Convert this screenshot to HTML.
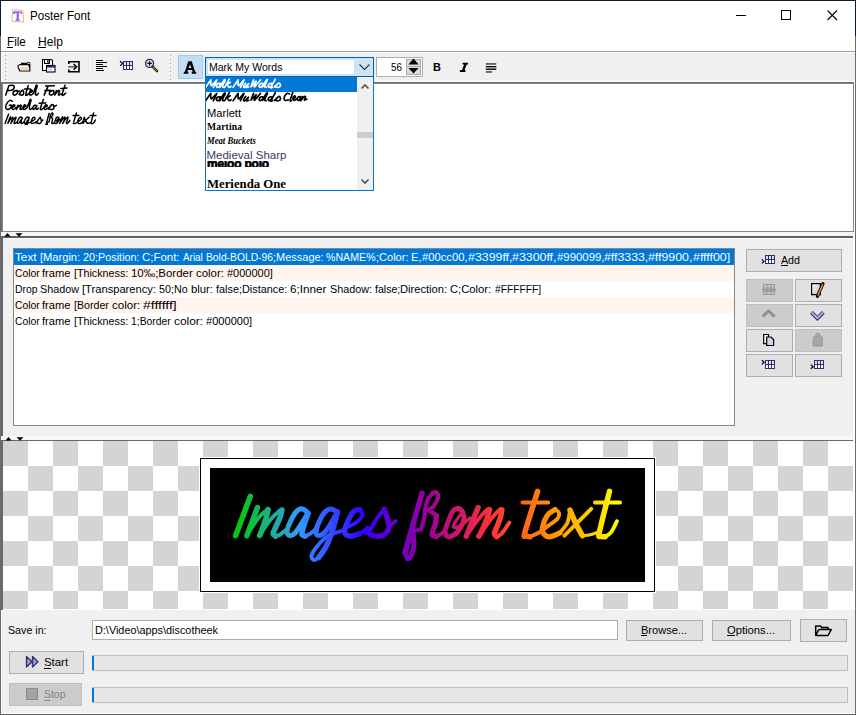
<!DOCTYPE html>
<html>
<head>
<meta charset="utf-8">
<title>Poster Font</title>
<style>
html,body{margin:0;padding:0;}
body{width:856px;height:715px;overflow:hidden;background:#fff;font-family:"Liberation Sans",sans-serif;font-size:11px;color:#000;position:relative;}
.abs{position:absolute;}
.t{position:absolute;white-space:nowrap;line-height:1;}
.btn{position:absolute;box-sizing:border-box;border:1px solid #adadad;background:#e1e1e1;}
.btn.dis{background:#cccccc;border-color:#bfbfbf;}
u{text-decoration:none;border-bottom:1px solid currentColor;}
.row{font-size:11px;line-height:1;white-space:nowrap;}
.row span{position:absolute;top:0;transform-origin:0 0;white-space:nowrap;}
.scr{-webkit-text-stroke:0.35px #000;font-family:"Liberation Serif",serif;font-style:italic;font-weight:bold;font-size:15px;transform-origin:0 0;transform:skewX(-8deg) scaleX(0.82);letter-spacing:-0.2px;}
.scr2{-webkit-text-stroke:0.3px currentColor;font-family:"Liberation Serif",serif;font-style:italic;font-weight:bold;font-size:13.5px;transform-origin:0 0;transform:skewX(-10deg) scaleX(0.86);letter-spacing:-0.2px;}
</style>
</head>
<body>
<!-- window frame -->
<div class="abs" id="frame" style="left:0;top:0;width:856px;height:715px;background:#fff;"></div>

<!-- title bar -->
<svg class="abs" style="left:10px;top:8px;" width="16" height="16" viewBox="0 0 16 16">
  <path d="M2.5 1.5 L13 2.5 L13.5 14 L2 13.5 Z" fill="#fff" stroke="#e9b98a" stroke-width="1"/>
  <path d="M3.5 3.5 H12 V6 H11 L10.6 4.8 H8.8 V11.6 L10 12 V12.8 H5.6 V12 L6.8 11.6 V4.8 H5 L4.6 6 H3.5 Z" fill="#c23cf0"/>
  <path d="M3.5 3.5 H7.8 V12.8 H5.6 V12 L6.8 11.6 V4.8 H5 L4.6 6 H3.5 Z" fill="#5a7bf0"/>
</svg>
<div class="t" id="title" style="left:29.5px;top:8.5px;font-size:13px;transform:scaleX(0.897);transform-origin:0 0;">Poster Font</div>
<svg class="abs" style="left:730px;top:5px;" width="116" height="22" viewBox="0 0 116 22" shape-rendering="crispEdges">
  <rect x="6" y="10" width="10" height="1" fill="#000"/>
  <rect x="51.5" y="5.5" width="9" height="9" fill="none" stroke="#000" stroke-width="1"/>
  <g shape-rendering="geometricPrecision" stroke="#000" stroke-width="1.1"><path d="M97.5 5.5 L107 15 M107 5.5 L97.5 15" fill="none"/></g>
</svg>
<!-- menu -->
<div class="t" id="mfile" style="left:7px;top:34.5px;font-size:13px;transform:scaleX(0.9);transform-origin:0 0;">File</div>
<div class="t" id="mhelp" style="left:38px;top:34.5px;font-size:13px;transform:scaleX(0.93);transform-origin:0 0;">Help</div>
<div class="abs" style="left:7px;top:47px;width:6px;height:1px;background:#000;"></div>
<div class="abs" style="left:38px;top:47px;width:8px;height:1px;background:#000;"></div>
<div class="abs" style="left:1px;top:51px;width:854px;height:1px;background:#a0a0a0;"></div>

<!-- toolbar -->
<div class="abs" id="toolbar" style="left:1px;top:52px;width:854px;height:30px;background:#f0f0f0;border-top:1px solid #fff;border-bottom:1px solid #fff;box-sizing:border-box;"></div>
<div class="abs" style="left:1px;top:52px;width:1px;height:30px;background:#fff;"></div>
<svg class="abs" style="left:0;top:52px;" width="520" height="30" viewBox="0 52 520 30" shape-rendering="crispEdges">
  <!-- grips -->
  <g fill="#a0a0a0">
    <rect x="5" y="55" width="1" height="1"/><rect x="5" y="59" width="1" height="1"/><rect x="5" y="63" width="1" height="1"/><rect x="5" y="67" width="1" height="1"/><rect x="5" y="71" width="1" height="1"/><rect x="5" y="75" width="1" height="1"/><rect x="5" y="79" width="1" height="1"/>
    <rect x="170" y="55" width="1" height="1"/><rect x="170" y="59" width="1" height="1"/><rect x="170" y="63" width="1" height="1"/><rect x="170" y="67" width="1" height="1"/><rect x="170" y="71" width="1" height="1"/><rect x="170" y="75" width="1" height="1"/><rect x="170" y="79" width="1" height="1"/>
  </g>
  <g fill="#fff">
    <rect x="4" y="54" width="1" height="1"/><rect x="4" y="58" width="1" height="1"/><rect x="4" y="62" width="1" height="1"/><rect x="4" y="66" width="1" height="1"/><rect x="4" y="70" width="1" height="1"/><rect x="4" y="74" width="1" height="1"/><rect x="4" y="78" width="1" height="1"/>
    <rect x="169" y="54" width="1" height="1"/><rect x="169" y="58" width="1" height="1"/><rect x="169" y="62" width="1" height="1"/><rect x="169" y="66" width="1" height="1"/><rect x="169" y="70" width="1" height="1"/><rect x="169" y="74" width="1" height="1"/><rect x="169" y="78" width="1" height="1"/>
  </g>
  <!-- thin separator after 3rd icon -->
  <rect x="88" y="56" width="1" height="22" fill="#eaeaea"/>
  <rect x="89" y="56" width="1" height="22" fill="#fafafa"/>
  <!-- folder icon 17..30 x 62..71 -->
  <g shape-rendering="geometricPrecision">
    <path d="M17.5 65.5 L21 62.8 H27 V62.2 H30 V71.5 H19.5 L17.5 67 Z" fill="#fff" stroke="none"/>
    <path d="M27 62.6 H30.2" stroke="#8b1a1a" stroke-width="1.2" fill="none"/>
    <path d="M21 63.3 H27.5 M17.6 66 L20 64.6 H28.5 L29.6 67.2 M17.8 66.4 L19.8 71 H29.8 V63.5" stroke="#000" stroke-width="1.2" fill="none"/>
    <path d="M20.2 67 H28.6 L29 70.2 H20.6 Z" fill="#f2d5ae"/>
  </g>
  <!-- floppy 42..55 x 59..72 -->
  <g shape-rendering="geometricPrecision">
    <path d="M42.5 59.5 H51.5 L52.5 60.5 V70.5 H42.5 Z" fill="#fff" stroke="#000" stroke-width="1.1"/>
    <rect x="44.5" y="59.5" width="5" height="4" fill="#fff" stroke="#000" stroke-width="1"/>
    <rect x="47.2" y="60.2" width="1.4" height="2.6" fill="#000"/>
    <rect x="46.5" y="65.5" width="8.5" height="6.5" fill="#fff" stroke="#000" stroke-width="1.1"/>
    <rect x="47" y="66" width="7.5" height="1.6" fill="#2a2a78"/>
    <rect x="48.6" y="68.8" width="3.6" height="1.6" fill="#c8c8c8"/>
  </g>
  <!-- arrow into box 68..80 x 61..72 -->
  <g shape-rendering="geometricPrecision" fill="none">
    <path d="M68.8 64 V61.8 H79 V71.8 H68.8 V69.6" stroke="#000" stroke-width="1.6"/>
    <path d="M68.2 66.8 H75.5" stroke="#555" stroke-width="1.5"/>
    <path d="M73.6 64 L76.6 66.8 L73.6 69.6" stroke="#000" stroke-width="1.5"/>
  </g>
  <!-- align-left icon 96..107 x 60..70 -->
  <g fill="#000">
    <rect x="96" y="60" width="7" height="1"/><rect x="96" y="62" width="11" height="1"/><rect x="96" y="64" width="7" height="1"/><rect x="96" y="66" width="11" height="1"/><rect x="96" y="68" width="7" height="1"/><rect x="96" y="70" width="8" height="1"/>
  </g>
  <!-- insert table icon 120..133 x 60..70 -->
  <g>
      <rect x="123" y="61" width="10" height="9" fill="#30306e"/>
      <rect x="124" y="62" width="2" height="3" fill="#dcdcf6"/><rect x="127" y="62" width="2" height="3" fill="#dcdcf6"/><rect x="130" y="62" width="2" height="3" fill="#dcdcf6"/>
      <rect x="124" y="66" width="2" height="3" fill="#fff"/><rect x="127" y="66" width="2" height="3" fill="#fff"/><rect x="130" y="66" width="2" height="3" fill="#fff"/>
      <path d="M120 61.3 L122.7 63.6 L120 65.9" stroke="#000" stroke-width="1.2" fill="none" shape-rendering="geometricPrecision"/>
  </g>
  <!-- magnifier 145..158 x 59..72 -->
  <g shape-rendering="geometricPrecision" fill="none">
    <circle cx="149.6" cy="63.4" r="4" fill="#dcdcf0" stroke="#26264e" stroke-width="1.3"/>
    <path d="M147.4 63.4 H151.8 M149.6 61.2 V65.6" stroke="#000" stroke-width="1.2"/>
    <path d="M152.6 66.6 L157 71" stroke="#1a1a1a" stroke-width="2.6" stroke-linecap="round"/>
    <path d="M153.2 67.2 L156.8 70.8" stroke="#c87830" stroke-width="1.2" stroke-linecap="round"/>
  </g>
  <!-- A button 178..203 x 55..79 -->
  <rect x="178.5" y="55.5" width="24" height="23" fill="#c4ddf3" stroke="#9ccbf0" stroke-width="1"/>
  <path shape-rendering="geometricPrecision" fill-rule="evenodd" fill="#000" d="M188.3 61.3 H191.7 L195.1 71.7 H196.2 V73.8 H191.8 V71.7 H192.7 L192.1 69.9 H187.9 L187.3 71.7 H188.3 V73.8 H183.8 V71.7 H184.9 Z M190 64.2 L191.4 68 H188.6 Z"/>
  <!-- bold / italic / justify -->
  <g shape-rendering="geometricPrecision">
    <rect x="485.8" y="63.2" width="10.5" height="1.5" fill="#444"/>
    <rect x="485.8" y="66" width="10.5" height="1.3" fill="#000"/>
    <rect x="485.8" y="67.3" width="10.5" height="1.3" fill="#999"/>
    <rect x="485.8" y="68.6" width="10.5" height="1.3" fill="#000"/>
    <rect x="485.8" y="71.2" width="6.4" height="1.5" fill="#444"/>
    <path d="M462.6 62.7 H468.1 V64.5 H466.7 L464.6 70.1 H465.4 V71.9 H459.9 V70.1 H462 L464.1 64.5 H462.6 Z" fill="#000"/>
  </g>
</svg>
<div class="t" id="tbB" style="left:433px;top:62px;font-size:11px;font-weight:bold;">B</div>

<!-- font combo 205..373 x 57..76 -->
<div class="abs" id="combo" style="left:205px;top:57px;width:169px;height:20px;box-sizing:border-box;border:1px solid #0063b1;background:#cce4f7;"></div>
<div class="abs" style="left:208px;top:60px;width:146px;height:14px;background:#fff;"></div>
<div class="t" id="combotext" style="left:209px;top:61.85px;font-size:11px;transform:scaleX(0.9567);transform-origin:0 0;">Mark My Words</div>
<svg class="abs" style="left:358px;top:62px;" width="14" height="10" viewBox="0 0 14 10"><path d="M1.5 2.5 L6.5 7.5 L11.5 2.5" stroke="#333" stroke-width="1.1" fill="none"/></svg>

<!-- size spinner 376..422 x 57..76 -->
<div class="abs" id="spin" style="left:376px;top:57px;width:47px;height:20px;box-sizing:border-box;border:1px solid #abadb3;background:#fff;"></div>
<div class="t" id="spintext" style="left:391px;top:61.85px;font-size:11px;transform:scaleX(0.8978);transform-origin:0 0;">56</div>
<div class="abs" style="left:406px;top:59px;width:15px;height:8px;box-sizing:border-box;border:1px solid #acacac;background:#dddddd;"></div>
<div class="abs" style="left:406px;top:66px;width:15px;height:9px;box-sizing:border-box;border:1px solid #acacac;background:#dddddd;"></div>
<svg class="abs" style="left:406px;top:58px;" width="16" height="18" viewBox="0 0 16 18"><path d="M7.5 0.6 L12.6 6.4 H2.4 Z M2.4 10 H12.6 L7.5 15.6 Z" fill="#000"/></svg>

<!-- text area -->
<div class="abs" id="textarea" style="left:1px;top:82px;width:853px;height:150px;box-sizing:border-box;background:#fff;border:1px solid #828790;border-top:1px solid #696969;border-left:1px solid #696969;"></div>
<div class="abs" style="left:2px;top:83px;width:851px;height:1px;background:#828790;"></div>
<div class="abs" style="left:2px;top:83px;width:1px;height:148px;background:#828790;"></div>
<!-- ta script -->
<svg class="abs" id="tascript" style="left:3px;top:84px;" width="110" height="41" viewBox="3 84 110 41">
<g fill="none" stroke="#000" stroke-linecap="round" stroke-linejoin="round">
<path stroke-width="1.55" d="M8.9 85.7 L5.7 95.1 M8.9 85.7 C9.6 85.6 11.7 85.0 12.6 85.3 C13.5 85.6 14.4 86.5 14.3 87.3 C14.2 88.1 12.8 89.7 11.8 90.2 C10.8 90.8 8.7 90.5 8.1 90.6 M17.1 90.6 C16.6 90.7 15.0 90.5 14.3 91.0 C13.6 91.5 12.9 93.2 13.0 93.9 C13.1 94.6 14.3 95.2 15.1 95.1 C15.8 94.9 17.2 93.8 17.5 93.0 C17.8 92.2 17.2 91.0 17.1 90.6 M17.3 92.0 L19.5 91.0 M19.2 94.3 C19.7 93.6 21.6 90.5 22.4 90.2 C23.1 89.9 23.7 91.8 23.7 92.6 C23.7 93.4 23.1 94.8 22.4 95.1 C21.7 95.4 20.1 94.8 19.6 94.7 M28.2 85.7 C27.8 87.1 25.9 92.7 25.7 94.3 C25.5 95.9 26.3 95.2 26.9 95.1 C27.4 94.9 28.6 93.7 29.0 93.4 M24.5 89.0 L30.6 89.0 M29.4 93.0 C29.9 92.7 31.9 91.9 32.3 91.4 C32.7 90.9 32.1 90.3 31.8 90.2 C31.5 90.1 30.6 90.4 30.2 91.0 C29.8 91.6 29.3 93.2 29.4 93.9 C29.5 94.6 30.3 95.2 31.0 95.1 C31.7 95.0 33.1 93.7 33.5 93.4 M33.5 93.4 C33.7 92.7 34.2 90.8 34.7 89.4 C35.2 88.1 35.9 85.8 36.3 85.3 C36.7 84.8 37.3 85.3 37.2 86.1 C37.1 86.9 36.2 88.8 35.9 90.2 C35.6 91.6 35.4 93.5 35.5 94.3 C35.6 95.1 36.3 95.2 36.8 95.1 C37.3 94.9 38.1 93.7 38.4 93.4 M47.8 86.9 L44.1 95.1 M45.7 86.1 L54.3 85.7 M44.9 90.6 L50.2 90.2 M53.5 90.6 C53.0 90.7 51.4 90.5 50.7 91.0 C50.0 91.5 49.3 93.2 49.4 93.9 C49.5 94.6 50.8 95.2 51.5 95.1 C52.2 94.9 53.6 93.8 53.9 93.0 C54.2 92.2 53.6 91.0 53.5 90.6 M56.4 90.6 L54.7 95.1 M55.1 94.3 C55.6 93.7 57.6 91.1 58.4 90.6 C59.1 90.0 59.6 90.4 59.6 91.0 C59.6 91.6 58.5 93.6 58.4 94.3 C58.3 95.0 58.8 95.2 59.2 95.1 C59.6 95.0 60.6 94.1 60.9 93.9 M65.0 85.3 C64.5 86.8 62.4 92.7 62.1 94.3 C61.8 95.9 62.7 95.3 63.3 95.1 C63.9 94.9 65.4 93.3 65.8 93.0 M60.9 88.5 L67.0 88.1"/>
<path stroke-width="1.55" d="M12.2 101.2 C11.8 101.1 10.7 100.1 9.8 100.4 C8.9 100.8 7.6 102.2 6.9 103.3 C6.2 104.4 5.6 106.3 5.7 107.3 C5.8 108.3 6.5 109.2 7.3 109.4 C8.0 109.6 9.5 108.9 10.2 108.2 C10.9 107.5 11.5 105.8 11.4 105.3 C11.3 104.8 9.7 105.3 9.4 105.3 M11.8 107.8 C12.3 107.5 14.3 106.6 14.7 106.1 C15.1 105.6 14.7 105.0 14.3 104.9 C14.0 104.8 13.0 105.2 12.6 105.7 C12.2 106.2 11.7 107.6 11.8 108.2 C11.9 108.8 12.7 109.5 13.4 109.4 C14.1 109.3 15.5 108.1 15.9 107.8 M17.9 105.3 L16.3 109.4 M16.7 108.6 C17.2 108.0 19.2 105.8 20.0 105.3 C20.8 104.8 21.2 105.2 21.2 105.7 C21.2 106.2 20.1 108.0 20.0 108.6 C19.9 109.2 20.4 109.5 20.8 109.4 C21.2 109.3 22.1 108.4 22.4 108.2 M22.4 108.2 C22.9 107.8 25.2 106.6 25.7 106.1 C26.2 105.5 25.6 105.0 25.3 104.9 C25.0 104.8 24.1 105.2 23.7 105.7 C23.3 106.2 22.8 107.6 22.9 108.2 C23.0 108.8 23.8 109.5 24.5 109.4 C25.2 109.3 26.5 108.1 26.9 107.8 M26.9 107.8 C27.2 107.1 28.1 105.1 28.6 103.7 C29.2 102.3 29.8 100.1 30.2 99.6 C30.6 99.0 31.1 99.6 31.0 100.4 C30.9 101.2 30.1 103.1 29.8 104.5 C29.5 105.9 29.3 107.8 29.4 108.6 C29.5 109.4 30.1 109.5 30.6 109.4 C31.1 109.3 32.0 108.1 32.3 107.8 M36.8 105.7 C36.4 105.6 35.4 105.0 34.7 105.3 C34.0 105.6 32.9 107.1 32.7 107.8 C32.5 108.5 33.0 109.4 33.5 109.4 C34.0 109.4 35.0 108.4 35.5 107.8 C36.0 107.2 36.6 106.0 36.8 105.7 M36.8 105.7 C36.6 106.2 35.9 108.0 35.9 108.6 C35.9 109.2 36.4 109.5 36.8 109.4 C37.2 109.3 38.1 108.4 38.4 108.2 M43.3 99.6 C42.8 101.1 40.7 107.0 40.4 108.6 C40.1 110.2 41.2 109.5 41.7 109.4 C42.2 109.3 43.4 108.1 43.7 107.8 M39.2 103.3 L45.7 102.9 M43.7 107.8 C44.2 107.5 46.5 106.6 47.0 106.1 C47.5 105.6 47.0 105.0 46.6 104.9 C46.2 104.8 45.3 105.2 44.9 105.7 C44.5 106.2 44.0 107.6 44.1 108.2 C44.2 108.8 45.0 109.5 45.7 109.4 C46.4 109.3 47.8 108.1 48.2 107.8 M48.2 109.0 C48.9 108.2 51.3 104.8 52.3 104.5 C53.2 104.2 53.8 106.1 53.9 106.9 C54.0 107.7 53.5 109.1 52.7 109.4 C52.0 109.8 50.0 109.1 49.4 109.0 M54.3 106.5 L56.4 105.3"/>
<path stroke-width="1.4" d="M8.6 114.1 L5.1 123.4 M10.3 116.7 L7.8 123.4 M8.2 122.6 C8.6 122.0 9.9 119.9 10.6 119.1 C11.3 118.2 12.0 117.7 12.4 117.4 C12.7 117.1 12.7 117.2 12.8 117.2 M12.8 117.2 C12.7 117.5 12.6 118.2 12.4 119.1 C12.1 120.0 11.4 121.8 11.2 122.5 C10.9 123.2 10.9 123.2 10.8 123.4 M11.1 122.8 C11.5 122.2 12.8 120.3 13.5 119.4 C14.3 118.5 15.2 117.8 15.6 117.4 C16.0 117.1 16.0 117.3 16.1 117.3 M16.1 117.3 C16.0 117.6 15.9 118.3 15.6 119.1 C15.3 119.9 14.6 121.4 14.3 122.0 C14.0 122.7 13.9 122.7 14.0 123.0 C14.0 123.2 14.5 123.4 14.6 123.5 M14.6 123.5 C14.7 123.4 15.2 123.4 15.6 123.1 C16.0 122.9 16.8 122.2 17.0 122.0 M22.3 118.0 C22.0 117.9 21.4 117.1 20.9 117.0 C20.5 117.0 19.9 117.2 19.4 117.8 C18.9 118.3 18.3 119.5 18.0 120.3 C17.6 121.0 17.2 122.0 17.2 122.5 C17.2 123.0 17.7 123.3 18.0 123.4 C18.3 123.4 18.8 123.1 19.2 122.8 C19.6 122.4 19.8 121.9 20.3 121.1 C20.9 120.3 21.9 118.5 22.3 118.0 M22.3 118.0 C22.1 118.5 21.5 120.3 21.2 121.1 C21.0 122.0 20.7 122.6 20.8 123.0 C20.8 123.3 21.4 123.4 21.5 123.5 M21.5 123.5 C21.7 123.4 22.3 123.2 22.7 123.0 C23.1 122.7 23.9 122.0 24.1 121.8 M29.2 117.7 C29.0 117.6 28.2 117.0 27.7 117.0 C27.2 117.0 26.8 117.2 26.3 117.8 C25.8 118.3 25.1 119.4 24.8 120.3 C24.4 121.1 24.2 122.1 24.2 122.6 C24.2 123.1 24.6 123.3 24.9 123.4 C25.2 123.4 25.6 123.2 26.0 122.8 C26.4 122.3 26.9 121.7 27.4 120.8 C28.0 120.0 28.9 118.3 29.2 117.7 M29.2 117.7 C29.1 118.3 28.7 119.8 28.3 121.1 C27.9 122.4 27.3 124.3 26.7 125.6 C26.1 126.8 25.1 128.0 24.8 128.5 M24.8 128.5 C24.6 128.6 24.0 129.2 23.8 129.1 C23.5 129.1 23.0 128.7 23.1 128.2 C23.1 127.7 23.6 127.0 24.2 126.2 C24.8 125.4 25.9 124.1 26.8 123.5 C27.8 122.8 29.4 122.6 30.1 122.3 C30.8 121.9 31.1 121.6 31.3 121.4 M31.3 121.4 C31.7 121.2 33.0 120.7 33.6 120.3 C34.3 119.8 35.0 119.0 35.1 118.5 C35.3 118.0 34.6 117.4 34.5 117.2 M34.5 117.2 C34.3 117.3 33.6 117.0 33.1 117.6 C32.5 118.2 31.6 120.0 31.3 120.8 C30.9 121.7 30.8 122.3 31.0 122.7 C31.1 123.2 31.6 123.5 32.2 123.5 C32.7 123.5 33.9 123.0 34.2 123.0 M34.2 123.0 C34.4 122.8 35.1 122.5 35.5 122.2 C35.8 122.0 36.2 121.6 36.3 121.4 M36.0 122.8 C36.1 122.6 36.4 122.6 36.9 122.0 C37.4 121.4 38.1 119.9 38.7 119.1 C39.2 118.3 40.0 117.5 40.3 117.2 M40.3 117.2 C40.5 117.6 41.0 119.2 41.2 119.9 C41.4 120.6 41.4 121.1 41.3 121.6 C41.3 122.0 41.1 122.4 40.7 122.7 C40.4 123.0 39.9 123.4 39.3 123.5 C38.7 123.6 37.7 123.3 37.2 123.2 C36.7 123.0 36.6 122.7 36.5 122.6 M41.3 121.3 L43.0 119.9 M49.2 113.3 L45.2 127.3 M45.2 127.3 C45.3 127.6 45.5 128.7 45.8 128.8 C46.0 129.0 46.4 128.7 46.6 128.2 C46.8 127.7 47.2 126.8 47.2 125.8 C47.3 124.8 47.1 122.8 47.1 122.2 M47.1 122.2 L49.0 121.9 M49.0 121.9 C49.1 121.4 49.6 120.0 49.7 119.2 C49.9 118.4 49.8 117.8 50.0 117.1 C50.1 116.4 50.3 115.4 50.6 114.8 C50.9 114.2 51.6 113.5 51.8 113.3 M51.8 113.3 C51.9 113.2 52.2 113.0 52.4 113.0 C52.6 113.1 52.9 113.3 53.0 113.6 C53.1 113.9 53.0 114.4 52.8 114.9 C52.7 115.3 52.2 116.1 51.9 116.4 C51.6 116.8 51.1 117.1 50.8 117.2 C50.5 117.3 50.4 117.1 50.3 117.1 M50.3 117.1 C50.5 117.2 51.1 117.5 51.5 117.8 C51.9 118.0 52.4 118.5 52.6 118.6 M52.6 118.6 C52.6 119.0 52.5 120.0 52.3 120.7 C52.2 121.3 51.8 122.0 51.7 122.5 C51.6 122.9 51.6 123.1 51.7 123.3 C51.9 123.5 52.4 123.5 52.5 123.6 M52.5 123.6 C52.7 123.5 53.2 123.3 53.5 123.1 C53.8 123.0 54.2 122.6 54.3 122.5 M58.8 117.7 C58.6 117.6 58.3 116.9 57.9 116.9 C57.5 116.9 56.9 117.1 56.5 117.5 C56.1 118.0 55.8 118.8 55.5 119.7 C55.2 120.5 54.6 121.8 54.6 122.5 C54.6 123.2 55.2 123.5 55.5 123.6 C55.8 123.8 56.2 123.4 56.5 123.3 C56.9 123.1 57.2 123.1 57.6 122.5 C58.0 121.9 58.9 120.5 59.1 119.7 C59.3 118.9 58.8 118.1 58.8 117.7 M58.8 117.8 C58.5 118.2 57.4 119.7 57.0 120.3 C56.6 120.8 56.5 121.2 56.6 121.3 C56.8 121.5 57.5 121.4 58.2 121.1 C58.8 120.7 60.2 119.5 60.6 119.2 M62.5 116.7 L59.7 123.5 M60.0 123.0 C60.4 122.4 61.9 120.3 62.6 119.4 C63.4 118.4 64.1 117.7 64.5 117.3 C65.0 116.9 65.0 117.2 65.1 117.2 M65.1 117.2 C65.0 117.6 64.9 118.5 64.5 119.4 C64.2 120.2 63.5 121.8 63.2 122.5 C62.9 123.2 62.7 123.3 62.6 123.5 M63.1 123.0 C63.5 122.4 64.8 120.3 65.6 119.4 C66.3 118.4 67.1 117.6 67.5 117.3 C67.9 117.0 68.0 117.3 68.1 117.3 M68.1 117.3 C68.0 117.6 67.9 118.6 67.6 119.4 C67.4 120.2 66.8 121.4 66.6 122.0 C66.4 122.6 66.3 122.7 66.3 123.0 C66.4 123.2 66.8 123.5 66.9 123.6 M66.9 123.6 C67.1 123.5 67.6 123.3 68.1 122.8 C68.6 122.2 69.6 120.7 69.9 120.3 M76.5 112.9 C76.0 114.5 74.0 120.7 73.6 122.5 C73.1 124.2 73.5 123.2 73.7 123.4 C73.9 123.5 74.6 123.6 74.7 123.6 M74.7 123.6 C75.1 123.4 76.4 122.9 77.1 122.5 C77.8 122.1 78.6 121.4 78.9 121.1 M73.0 115.5 L79.0 115.5 M78.9 121.1 C79.3 120.8 80.8 119.9 81.2 119.4 C81.7 118.8 81.6 118.2 81.5 117.9 C81.4 117.5 80.8 117.3 80.7 117.2 M80.7 117.2 C80.4 117.4 79.4 117.8 78.9 118.5 C78.4 119.2 77.8 120.7 77.7 121.4 C77.5 122.2 77.7 122.6 78.0 123.0 C78.3 123.3 78.8 123.7 79.5 123.6 C80.1 123.6 81.4 122.9 81.8 122.7 M81.8 122.7 C82.1 122.3 83.2 121.2 83.6 120.3 C84.0 119.3 84.1 117.8 84.2 117.3 M84.2 117.3 C84.4 117.8 85.1 119.6 85.6 120.6 C86.1 121.6 86.9 122.9 87.2 123.4 M82.9 123.4 C83.4 122.8 85.0 121.2 86.1 120.1 C87.2 119.1 88.7 117.5 89.2 117.0 M87.2 123.4 C87.5 123.3 88.3 123.3 88.9 123.1 C89.5 123.0 90.5 122.7 90.8 122.6 M93.6 112.9 C93.2 114.5 91.5 120.7 91.2 122.5 C90.8 124.3 91.2 123.3 91.4 123.5 C91.7 123.7 92.3 123.6 92.5 123.6 M92.5 123.6 C92.7 123.5 93.4 123.2 93.9 122.6 C94.4 122.0 95.1 120.4 95.3 120.0 M90.1 115.5 L96.0 115.5"/>
</g></svg>
<!-- /ta script -->

<!-- dropdown list 205..373 x 77..190 -->
<div class="abs" id="dd" style="left:205px;top:77px;width:169px;height:114px;box-sizing:border-box;border:1px solid #0078d7;border-top:none;background:#fff;overflow:hidden;">
  <div class="abs" style="left:0;top:0;width:151px;height:15px;background:#0078d7;"></div>
  <div class="abs" style="left:151px;top:0;width:16px;height:113px;background:#f0f0f0;"></div>
  <div class="abs" style="left:151px;top:55px;width:16px;height:6px;background:#cdcdcd;"></div>
  <svg class="abs" style="left:151px;top:0;" width="16" height="113" viewBox="0 0 16 113"><path d="M4.5 11.5 L8 8 L11.5 11.5 M4.5 102.5 L8 106 L11.5 102.5" stroke="#505050" stroke-width="1.6" fill="none"/></svg>
  <!-- dd script -->
<svg class="abs" id="ddscript" style="left:0;top:0;" width="150" height="28" viewBox="206 77 150 28">
<g fill="none" stroke-linecap="round" stroke-linejoin="round" stroke-width="1.7">
<path stroke="#fff" d="M210.8 79.9 L205.6 87.3 M210.8 79.9 C210.9 80.9 210.3 85.6 211.3 85.6 C212.3 85.6 216.5 79.6 216.9 79.9 C217.2 80.2 213.9 86.1 213.3 87.3 M220.3 83.4 C219.9 83.4 218.7 83.2 218.0 83.6 C217.3 84.0 216.3 85.3 216.3 85.9 C216.2 86.5 216.9 87.3 217.5 87.2 C218.2 87.1 219.7 86.1 220.1 85.5 C220.6 84.9 220.3 83.7 220.3 83.4 M220.2 83.6 C220.1 84.2 219.1 86.7 219.1 87.2 C219.1 87.8 220.1 87.0 220.2 86.9 M220.2 86.9 C220.6 86.2 221.9 83.6 222.6 82.4 C223.3 81.2 224.2 79.9 224.7 79.6 C225.1 79.3 225.4 79.8 225.2 80.5 C225.0 81.2 223.9 82.6 223.4 83.7 C223.0 84.8 222.4 86.3 222.5 86.9 C222.6 87.5 223.7 87.2 224.0 87.3 M229.3 79.2 L224.7 87.3 M226.1 84.4 C226.8 84.1 230.0 82.4 230.2 82.4 C230.5 82.4 227.7 83.8 227.6 84.6 C227.4 85.4 228.8 87.0 229.4 87.3 C230.0 87.6 230.8 86.5 231.1 86.3 M238.1 79.9 L233.1 87.3 M238.1 79.9 C238.2 80.9 237.6 85.6 238.6 85.6 C239.6 85.6 243.8 79.6 244.1 79.9 C244.4 80.2 241.1 86.1 240.5 87.3 M245.7 83.1 C245.3 83.7 243.7 85.8 243.6 86.5 C243.5 87.2 244.1 87.8 244.9 87.3 C245.8 86.8 248.3 83.7 248.6 83.7 C248.8 83.7 246.4 86.8 246.4 87.3 C246.5 87.8 248.3 87.0 248.7 86.9 M253.6 79.9 C253.1 81.1 250.5 86.7 250.9 86.9 C251.3 87.1 255.5 81.1 256.1 81.1 C256.6 81.1 253.6 87.1 254.4 86.9 C255.1 86.7 259.5 81.1 260.5 79.9 M262.8 83.4 C262.5 83.4 261.4 83.2 260.7 83.6 C260.1 84.0 259.2 85.3 259.1 85.9 C259.0 86.5 259.7 87.3 260.3 87.2 C260.8 87.1 262.2 86.1 262.6 85.5 C263.1 84.9 262.8 83.7 262.8 83.4 M262.7 86.9 C263.1 86.2 264.2 83.6 264.9 82.4 C265.6 81.2 266.5 79.9 266.9 79.6 C267.3 79.3 267.5 79.8 267.3 80.5 C267.1 81.2 266.1 82.6 265.7 83.7 C265.3 84.8 264.7 86.3 264.8 86.9 C264.9 87.5 265.9 87.2 266.1 87.3 M271.9 83.4 C271.5 83.4 270.4 83.2 269.7 83.6 C269.1 84.0 268.2 85.3 268.1 85.9 C268.0 86.5 268.7 87.3 269.3 87.2 C269.9 87.1 271.2 86.1 271.7 85.5 C272.1 84.9 271.8 83.7 271.9 83.4 M275.3 79.2 C274.6 80.5 271.5 86.0 271.0 87.3 C270.5 88.6 272.3 87.3 272.5 87.3 M274.5 86.9 C275.3 86.3 277.8 83.4 278.8 83.1 C279.8 82.8 280.5 84.6 280.5 85.3 C280.5 86.0 279.6 87.0 278.7 87.3 C277.8 87.6 275.9 87.0 275.3 86.9"/>
<path stroke="#000" d="M210.8 93.3 L205.6 100.7 M210.8 93.3 C210.9 94.3 210.3 99.0 211.3 99.0 C212.3 99.0 216.5 93.0 216.9 93.3 C217.2 93.6 213.9 99.5 213.3 100.7 M220.3 96.8 C219.9 96.8 218.7 96.6 218.0 97.0 C217.3 97.4 216.3 98.7 216.3 99.3 C216.2 99.9 216.9 100.7 217.5 100.6 C218.2 100.5 219.7 99.5 220.1 98.9 C220.6 98.3 220.3 97.1 220.3 96.8 M220.2 97.0 C220.1 97.6 219.1 100.1 219.1 100.6 C219.1 101.2 220.1 100.4 220.2 100.3 M220.2 100.3 C220.6 99.6 221.9 97.0 222.6 95.8 C223.3 94.6 224.2 93.3 224.7 93.0 C225.1 92.7 225.4 93.2 225.2 93.9 C225.0 94.6 223.9 96.0 223.4 97.1 C223.0 98.2 222.4 99.7 222.5 100.3 C222.6 100.9 223.7 100.6 224.0 100.7 M229.3 92.6 L224.7 100.7 M226.1 97.8 C226.8 97.5 230.0 95.8 230.2 95.8 C230.5 95.8 227.7 97.2 227.6 98.0 C227.4 98.8 228.8 100.4 229.4 100.7 C230.0 101.0 230.8 99.9 231.1 99.7 M238.1 93.3 L233.1 100.7 M238.1 93.3 C238.2 94.3 237.6 99.0 238.6 99.0 C239.6 99.0 243.8 93.0 244.1 93.3 C244.4 93.6 241.1 99.5 240.5 100.7 M245.7 96.5 C245.3 97.1 243.7 99.2 243.6 99.9 C243.5 100.6 244.1 101.2 244.9 100.7 C245.8 100.2 248.3 97.1 248.6 97.1 C248.8 97.1 246.4 100.2 246.4 100.7 C246.5 101.2 248.3 100.4 248.7 100.3 M253.6 93.3 C253.1 94.5 250.5 100.1 250.9 100.3 C251.3 100.5 255.5 94.5 256.1 94.5 C256.6 94.5 253.6 100.5 254.4 100.3 C255.1 100.1 259.5 94.5 260.5 93.3 M262.8 96.8 C262.5 96.8 261.4 96.6 260.7 97.0 C260.1 97.4 259.2 98.7 259.1 99.3 C259.0 99.9 259.7 100.7 260.3 100.6 C260.8 100.5 262.2 99.5 262.6 98.9 C263.1 98.3 262.8 97.1 262.8 96.8 M262.7 100.3 C263.1 99.6 264.2 97.0 264.9 95.8 C265.6 94.6 266.5 93.3 266.9 93.0 C267.3 92.7 267.5 93.2 267.3 93.9 C267.1 94.6 266.1 96.0 265.7 97.1 C265.3 98.2 264.7 99.7 264.8 100.3 C264.9 100.9 265.9 100.6 266.1 100.7 M271.9 96.8 C271.5 96.8 270.4 96.6 269.7 97.0 C269.1 97.4 268.2 98.7 268.1 99.3 C268.0 99.9 268.7 100.7 269.3 100.6 C269.9 100.5 271.2 99.5 271.7 98.9 C272.1 98.3 271.8 97.1 271.9 96.8 M275.3 92.6 C274.6 94.0 271.5 99.4 271.0 100.7 C270.5 102.0 272.3 100.7 272.5 100.7 M274.5 100.3 C275.3 99.7 277.8 96.8 278.8 96.5 C279.8 96.2 280.5 98.0 280.5 98.7 C280.5 99.4 279.6 100.4 278.7 100.7 C277.8 101.0 275.9 100.4 275.3 100.3 M289.5 94.0 C289.1 93.9 287.8 92.9 286.9 93.4 C286.0 93.9 284.6 96.0 284.3 97.2 C284.0 98.4 284.4 100.0 285.0 100.4 C285.6 100.8 287.7 99.9 288.2 99.8 M292.7 92.7 C292.3 94.0 290.3 99.1 290.1 100.4 C289.9 101.7 291.2 100.7 291.4 100.7 M292.7 99.1 C293.1 98.8 295.0 97.7 295.3 97.2 C295.6 96.7 295.0 95.8 294.6 95.9 C294.2 96.0 293.1 97.2 293.0 97.9 C292.9 98.7 293.4 100.2 294.0 100.4 C294.6 100.6 296.1 99.3 296.5 99.1 M300.3 96.6 C300.0 96.6 298.9 96.4 298.4 96.8 C297.9 97.2 297.3 98.5 297.3 99.1 C297.3 99.7 298.0 100.5 298.6 100.4 C299.1 100.3 300.2 99.3 300.5 98.7 C300.8 98.1 300.4 96.9 300.3 96.6 M300.4 96.8 C300.3 97.4 299.9 99.8 300.0 100.4 C300.1 101.0 300.8 100.2 301.0 100.2 M302.3 96.6 L301.0 100.4 M301.4 99.8 C301.9 99.3 303.6 97.0 304.3 96.6 C305.0 96.2 305.5 96.6 305.5 97.2 C305.5 97.8 304.3 99.9 304.5 100.2 C304.7 100.5 306.4 99.3 306.8 99.1"/>
</g></svg>
<!-- /dd script -->
  <div class="t" id="dd3" style="left:0.5px;top:31.35px;font-size:11px;transform:scaleX(1.0113);transform-origin:0 0;">Marlett</div>
  <div class="t" id="dd4" style="left:0.5px;top:44px;font-size:11px;font-weight:bold;font-family:'Liberation Serif',serif;letter-spacing:0.2px;transform:scaleX(0.87);transform-origin:0 0;">Martina</div>
  <div class="t" id="dd5" style="left:1px;top:59.5px;font-size:9.5px;font-weight:bold;font-style:italic;font-family:'Liberation Serif',serif;transform:scaleX(0.91);transform-origin:0 0;">Meat Buckets</div>
  <div class="t" id="dd6" style="left:0.5px;top:72.5px;font-size:11.5px;color:#3a3a5a;letter-spacing:0px;">Medieval Sharp</div>
  <div class="abs" style="left:0;top:84px;width:150px;height:6px;overflow:hidden;"><div class="t" id="dd7" style="left:1px;top:-3.5px;font-size:12px;font-weight:bold;letter-spacing:-0.2px;-webkit-text-stroke:0.7px #000;">meloo bolo</div></div>
  <div class="t" id="dd8" style="left:1px;top:99.5px;font-size:13.5px;font-weight:bold;font-family:'Liberation Serif',serif;letter-spacing:0px;transform:scaleX(0.945);transform-origin:0 0;">Merienda One</div>
</div>

<!-- splitter 1 -->
<div class="abs" style="left:1px;top:232px;width:854px;height:4px;background:#f4f4f4;"></div>
<div class="abs" style="left:1px;top:236px;width:852px;height:2px;background:#5f5f5f;"></div>
<svg class="abs" style="left:4px;top:232px;" width="20" height="5" viewBox="0 0 20 5"><path d="M0.5 4.5 L3.5 1 L6.5 4.5 Z M11.5 1.2 H18.5 L15 4.8 Z" fill="#000"/></svg>

<!-- middle panel -->
<div class="abs" id="mid" style="left:1px;top:238px;width:854px;height:198px;background:#f0f0f0;"></div>
<div class="abs" style="left:1px;top:238px;width:2px;height:198px;background:#696969;"></div>
<div class="abs" style="left:3px;top:238px;width:850px;height:1px;background:#fff;"></div>
<div class="abs" style="left:853px;top:236px;width:2px;height:374px;background:#fff;z-index:3;"></div>
<div class="abs" id="list" style="left:13px;top:248px;width:722px;height:178px;box-sizing:border-box;border:1px solid #828790;background:#fff;"></div>
<div class="abs" style="left:14px;top:249px;width:720px;height:16px;background:#0078d7;"></div>
<div class="abs" style="left:14px;top:265px;width:720px;height:16px;background:#fff5ee;"></div>
<div class="abs" style="left:14px;top:281px;width:720px;height:16px;background:#fff;"></div>
<div class="abs" style="left:14px;top:297px;width:720px;height:16px;background:#fff5ee;"></div>
<div class="abs" style="left:14px;top:313px;width:720px;height:16px;background:#fff;"></div>

<!-- rows text -->
<div class="abs row" id="row1" style="left:0;top:252.25px;color:#fff;">
<span style="left:14.8px;transform:scaleX(1.0674);">Text&nbsp;</span>
<span style="left:39.6px;transform:scaleX(1.0094);">[Margin:&nbsp;</span>
<span style="left:82.8px;transform:scaleX(0.9844);">20;Position:&nbsp;</span>
<span style="left:142.4px;transform:scaleX(1.0403);">C;Font:&nbsp;</span>
<span style="left:183.1px;transform:scaleX(0.8978);">Arial&nbsp;</span>
<span style="left:205.6px;transform:scaleX(0.9367);">Bold-BOLD-96</span>
<span style="left:272.6px;transform:scaleX(0.9979);">;Message:&nbsp;</span>
<span style="left:326.3px;transform:scaleX(0.9660);">%NAME%</span>
<span style="left:375.9px;transform:scaleX(1.0013);">;Color:&nbsp;</span>
<span style="left:411.4px;transform:scaleX(1.0090);">E,</span>
<span style="left:421.9px;transform:scaleX(1.0211);">#00cc00,</span>
<span style="left:467.5px;transform:scaleX(1.1248);">#3399ff,</span>
<span style="left:512.0px;transform:scaleX(1.1248);">#3300ff,</span>
<span style="left:556.5px;transform:scaleX(1.0351);">#990099,</span>
<span style="left:604.0px;transform:scaleX(1.1197);">#ff3333,</span>
<span style="left:648.3px;transform:scaleX(1.1223);">#ff9900,</span>
<span style="left:692.7px;transform:scaleX(1.1257);">#ffff00]</span>
</div>
<div class="abs row" id="row2" style="left:0;top:268.25px;color:#000;">
<span style="left:14.8px;transform:scaleX(0.9406);">Color&nbsp;</span>
<span style="left:42.4px;transform:scaleX(1.0137);">frame&nbsp;</span>
<span style="left:74.0px;transform:scaleX(0.9747);">[Thickness:&nbsp;</span>
<span style="left:131.2px;transform:scaleX(1.0405);">10‰;Border&nbsp;</span>
<span style="left:196.1px;transform:scaleX(1.0350);">color:&nbsp;</span>
<span style="left:227.1px;transform:scaleX(0.9980);">#000000]</span>
</div>
<div class="abs row" id="row3" style="left:0;top:284.25px;color:#000;">
<span style="left:14.8px;transform:scaleX(0.9403);">Drop&nbsp;</span>
<span style="left:40.1px;transform:scaleX(0.9810);">Shadow&nbsp;</span>
<span style="left:82.1px;transform:scaleX(1.0143);">[Transparency:&nbsp;</span>
<span style="left:159.2px;transform:scaleX(0.9747);">50;No&nbsp;</span>
<span style="left:190.8px;transform:scaleX(1.0265);">blur:&nbsp;</span>
<span style="left:215.9px;transform:scaleX(0.9880);">false;Distance:&nbsp;</span>
<span style="left:290.2px;transform:scaleX(1.0640);">6;Inner&nbsp;</span>
<span style="left:329.9px;transform:scaleX(0.9809);">Shadow:&nbsp;</span>
<span style="left:374.9px;transform:scaleX(0.9621);">false;</span>
<span style="left:400.2px;transform:scaleX(1.0138);">Direction:&nbsp;</span>
<span style="left:450.4px;transform:scaleX(1.0206);">C;Color:&nbsp;</span>
<span style="left:494.7px;transform:scaleX(0.9333);">#FFFFFF]</span>
</div>
<div class="abs row" id="row4" style="left:0;top:300.25px;color:#000;">
<span style="left:14.8px;transform:scaleX(0.9406);">Color&nbsp;</span>
<span style="left:42.4px;transform:scaleX(1.0137);">frame&nbsp;</span>
<span style="left:74.0px;transform:scaleX(0.9657);">[Border&nbsp;</span>
<span style="left:111.8px;transform:scaleX(1.0516);">color:&nbsp;</span>
<span style="left:143.3px;transform:scaleX(1.2702);">#ffffff]</span>
</div>
<div class="abs row" id="row5" style="left:0;top:316.25px;color:#000;">
<span style="left:14.8px;transform:scaleX(0.9406);">Color&nbsp;</span>
<span style="left:42.4px;transform:scaleX(1.0137);">frame&nbsp;</span>
<span style="left:74.0px;transform:scaleX(0.9747);">[Thickness:&nbsp;</span>
<span style="left:131.2px;transform:scaleX(0.9436);">1;Border&nbsp;</span>
<span style="left:173.9px;transform:scaleX(1.0817);">color:&nbsp;</span>
<span style="left:206.3px;transform:scaleX(1.0067);">#000000]</span>
</div>
<!-- /rows text -->
<!-- side buttons -->
<div class="btn" style="left:746px;top:249px;width:96px;height:23px;"></div>
<div class="btn dis" style="left:746px;top:279px;width:47px;height:23px;"></div>
<div class="btn" style="left:795px;top:279px;width:47px;height:23px;"></div>
<div class="btn dis" style="left:746px;top:304px;width:47px;height:23px;"></div>
<div class="btn" style="left:795px;top:304px;width:47px;height:23px;"></div>
<div class="btn" style="left:746px;top:329px;width:47px;height:23px;"></div>
<div class="btn dis" style="left:795px;top:329px;width:47px;height:23px;"></div>
<div class="btn" style="left:746px;top:354px;width:47px;height:23px;"></div>
<div class="btn" style="left:795px;top:354px;width:47px;height:23px;"></div>

<div class="t" id="addtxt" style="left:781px;top:254.85px;font-size:11px;transform:scaleX(0.9709);transform-origin:0 0;">Add</div>
<div class="abs" style="left:781px;top:265px;width:7px;height:1px;background:#000;"></div>
<svg class="abs" style="left:746px;top:249px;" width="96" height="128" viewBox="746 249 96 128">
  <defs>
    <linearGradient id="pg" x1="0" y1="0" x2="1" y2="1"><stop offset="0" stop-color="#ffffff"/><stop offset="1" stop-color="#b8b8e8"/></linearGradient>
    <g id="grid" shape-rendering="crispEdges">
      <rect x="0" y="0" width="10" height="9" fill="#30306e"/>
      <rect x="1" y="1" width="2" height="3" fill="#dcdcf6"/><rect x="4" y="1" width="2" height="3" fill="#dcdcf6"/><rect x="7" y="1" width="2" height="3" fill="#dcdcf6"/>
      <rect x="1" y="5" width="2" height="3" fill="#fff"/><rect x="4" y="5" width="2" height="3" fill="#fff"/><rect x="7" y="5" width="2" height="3" fill="#fff"/>
    </g>
  </defs>
  <!-- Add icon -->
  <use href="#grid" x="765" y="255"/>
  <path d="M761.8 259.4 L764 261.4 L761.8 263.4" stroke="#000" stroke-width="1.1" fill="none"/>
  <!-- delete row (disabled) -->
  <g stroke="#9a9a9a" fill="none" stroke-width="1">
    <rect x="763.5" y="284.5" width="11" height="10" fill="#c4c4c4"/>
    <path d="M763.5 288 H774.5 M763.5 291.5 H774.5 M767 284.5 V294.5 M771 284.5 V294.5"/>
    <path d="M762 289.8 H776" stroke="#8c8c8c" stroke-width="1.2"/>
  </g>
  <!-- edit icon -->
  <path d="M811.6 283.6 H820.4 V294.6 H811.6 Z" fill="url(#pg)" stroke="#000" stroke-width="1.2"/>
  <path d="M823 283.6 L817.4 296.4" stroke="#000" stroke-width="3.2" stroke-linecap="round"/>
  <path d="M822.8 284.4 L817.8 295.6" stroke="#e8c020" stroke-width="1.4"/>
  <path d="M823.3 284.6 L818.6 295.2" stroke="#d02020" stroke-width="0.7"/>
  <!-- up chevron (disabled) -->
  <path d="M762.6 316.6 L768.6 311 L774.6 316.6" stroke="#909090" stroke-width="3" fill="none"/>
  <!-- down chevron -->
  <path d="M811.4 312.4 L817.4 318.4 L823.4 312.4" stroke="#2c2c6c" stroke-width="3.8" fill="none"/>
  <path d="M811.6 312.4 L817.4 318.2 L823.2 312.4" stroke="#b4b4e6" stroke-width="2" fill="none"/>
  <!-- copy -->
  <path d="M763.7 334.5 H768.5 V343.6 H763.7 Z" fill="#fff" stroke="#000" stroke-width="1.2"/>
  <path d="M766.7 337 H771 L773.6 339.6 V345.5 H766.7 Z" fill="#d2d2f0" stroke="#000" stroke-width="1.2"/>
  <!-- paste (disabled) -->
  <path d="M813.3 337.6 L815.6 335.4 H820 L822.3 337.6 V346 H813.3 Z" fill="#a6a6a6" stroke="#989898" stroke-width="1"/>
  <rect x="816.2" y="333.6" width="3.2" height="2.4" fill="#b4b4b4" stroke="#989898" stroke-width="0.8"/>
  <!-- insert before -->
  <use href="#grid" x="765" y="360"/>
  <path d="M761.8 360.2 L764.2 362.3 L761.8 364.4" stroke="#000" stroke-width="1.2" fill="none"/>
  <!-- insert after -->
  <use href="#grid" x="814" y="360"/>
  <path d="M810.8 364.6 L813.2 366.7 L810.8 368.8" stroke="#000" stroke-width="1.2" fill="none"/>
</svg>

<!-- splitter 2 -->
<div class="abs" style="left:1px;top:436px;width:854px;height:4px;background:#f8f8f8;"></div>
<div class="abs" style="left:1px;top:440px;width:852px;height:1px;background:#696969;"></div>
<svg class="abs" style="left:5px;top:436px;" width="20" height="5" viewBox="0 0 20 5"><path d="M0.5 4.5 L3.5 1 L6.5 4.5 Z M11.5 1.2 H18.5 L15 4.8 Z" fill="#000"/></svg>

<!-- preview -->
<div class="abs" style="left:1px;top:441px;width:2px;height:169px;background:#696969;"></div>
<div class="abs" id="preview" style="left:3px;top:441px;width:850px;height:168px;background-color:#fff;background-image:conic-gradient(#fff 25%,#d4d4d4 0 50%,#fff 0 75%,#d4d4d4 0);background-size:50px 50px;background-position:0 0;"></div>
<div class="abs" style="left:3px;top:609px;width:852px;height:1px;background:#fff;"></div>
<div class="abs" id="img" style="left:200px;top:458px;width:455px;height:134px;box-sizing:border-box;border:1px solid #000;background:#fff;box-shadow:0 0 0 1px #fff;"></div>
<div class="abs" id="black" style="left:210px;top:468px;width:435px;height:114px;background:#000;"></div>

<!-- script text -->
<svg class="abs" id="script" style="left:210px;top:468px;" width="435" height="114" viewBox="210 468 435 114">
<defs><linearGradient id="rg" gradientUnits="userSpaceOnUse" x1="235" y1="0" x2="620" y2="0">
<stop offset="0" stop-color="#00cc00"/><stop offset="0.1667" stop-color="#3399ff"/><stop offset="0.3333" stop-color="#3300ff"/><stop offset="0.5" stop-color="#990099"/><stop offset="0.6667" stop-color="#ff3333"/><stop offset="0.8333" stop-color="#ff9900"/><stop offset="1" stop-color="#ffff00"/>
</linearGradient></defs>
<g fill="none" stroke="url(#rg)" stroke-linecap="round" stroke-linejoin="round">
<path stroke-width="5.5" d="M250.3 496.4 L235.6 535.6 M257.5 507.5 L246.9 535.6 M268.1 509.6 C267.8 510.9 267.4 513.8 266.2 517.5 C265.1 521.2 262.4 528.9 261.2 532.0 C260.1 535.0 259.9 535.0 259.6 535.6 M281.9 510.0 C281.6 511.2 281.2 514.2 280.0 517.5 C278.8 520.8 275.5 527.3 274.4 530.0 C273.2 532.7 272.9 532.9 273.1 533.9 C273.3 534.9 275.2 535.8 275.6 536.2 M308.1 513.1 C307.4 515.3 304.8 522.8 303.8 526.2 C302.7 529.7 301.7 532.3 301.9 533.9 C302.1 535.6 304.5 535.8 305.0 536.2 M337.5 511.9 C336.9 514.3 335.5 520.7 333.8 526.2 C332.0 531.8 329.4 539.8 326.9 545.0 C324.4 550.2 320.1 555.4 318.8 557.5 M422.0 493.3 L405.0 552.5 M478.1 507.5 L466.2 536.2 M489.4 509.6 C489.0 511.1 488.3 515.0 486.9 518.8 C485.5 522.5 482.6 529.1 481.2 532.0 C479.9 534.9 479.2 535.5 478.8 536.2 M501.9 510.0 C501.6 511.5 501.1 515.4 500.0 518.8 C498.9 522.1 496.5 527.5 495.6 530.0 C494.7 532.5 494.2 532.8 494.4 533.9 C494.6 535.0 496.5 536.2 496.9 536.7 M537.6 491.4 C535.5 498.2 527.0 524.6 525.0 532.0 C523.0 539.3 524.8 534.8 525.6 535.6 C526.4 536.4 529.3 536.6 530.0 536.8 M570.0 510.0 C571.0 512.3 573.9 519.7 576.0 524.0 C578.1 528.3 581.4 533.8 582.5 535.7 M609.5 491.4 C607.8 498.2 600.9 524.5 599.4 532.0 C597.9 539.4 599.7 535.4 600.6 536.2 C601.5 537.0 604.3 536.7 605.0 536.8"/>
<path stroke-width="3.9" d="M248.5 532.4 C250.2 529.9 255.8 521.1 258.8 517.5 C261.7 513.9 264.7 511.9 266.2 510.6 C267.8 509.3 267.8 509.8 268.1 509.6 M261.0 533.1 C262.7 530.7 268.1 522.5 271.2 518.8 C274.4 515.0 278.2 512.1 280.0 510.6 C281.8 509.1 281.6 510.1 281.9 510.0 M275.6 536.2 C276.3 536.0 278.3 535.7 280.0 534.7 C281.7 533.7 285.0 530.8 286.0 530.0 M305.0 536.2 C305.8 535.8 308.2 535.1 310.0 533.9 C311.8 532.7 315.0 529.8 316.0 529.0 M318.8 557.5 C318.0 557.9 315.6 560.2 314.4 560.0 C313.2 559.8 311.2 558.3 311.5 556.2 C311.8 554.2 313.6 550.8 316.2 547.5 C318.9 544.2 323.3 539.0 327.5 536.2 C331.7 533.4 338.1 532.4 341.2 531.0 C344.4 529.5 345.4 528.1 346.2 527.5 M346.2 527.5 C347.9 526.7 353.5 524.6 356.2 522.5 C359.0 520.4 361.9 517.1 362.5 515.0 C363.1 512.9 360.4 510.5 360.0 509.6 M358.8 533.9 C359.6 533.4 362.5 531.9 364.0 530.8 C365.5 529.7 366.9 528.0 367.5 527.5 M366.0 533.1 C366.7 532.6 368.1 532.6 370.0 530.0 C371.9 527.4 375.1 520.9 377.5 517.5 C379.9 514.1 383.2 510.8 384.4 509.4 M388.5 527.0 L395.6 521.0 M413.0 530.8 L421.2 529.4 M436.1 536.6 C436.8 536.3 438.7 535.5 440.0 534.7 C441.3 533.9 443.1 532.4 443.8 532.0 M467.5 533.9 C469.4 531.4 475.5 522.7 478.8 518.8 C482.0 514.8 485.1 511.5 486.9 510.0 C488.7 508.5 489.0 509.7 489.4 509.6 M480.6 533.9 C482.4 531.4 488.1 522.7 491.2 518.8 C494.4 514.8 497.6 511.5 499.4 510.0 C501.2 508.5 501.5 510.0 501.9 510.0 M496.9 536.7 C497.8 536.1 499.9 535.5 502.0 533.1 C504.1 530.8 508.2 524.3 509.4 522.5 M530.0 536.8 C531.7 536.0 537.1 533.7 540.0 532.0 C542.9 530.2 546.2 527.2 547.5 526.2 M547.5 526.2 C549.2 525.0 555.6 521.0 557.5 518.8 C559.4 516.5 559.2 514.0 558.8 512.5 C558.3 511.0 555.6 510.1 555.0 509.6 M560.0 532.9 C561.2 531.2 565.8 526.3 567.5 522.5 C569.2 518.7 569.6 512.1 570.0 510.0 M564.4 535.6 C566.7 533.3 573.5 526.5 578.0 522.0 C582.5 517.5 589.0 511.0 591.2 508.8 M605.0 536.8 C606.0 536.1 609.0 534.9 611.0 532.4 C613.0 529.8 615.9 523.1 616.9 521.2"/>
<path stroke-width="5.0" d="M308.1 513.1 C307.2 512.4 304.5 509.1 302.5 508.9 C300.5 508.7 298.1 509.7 296.0 512.0 C293.9 514.3 291.5 519.2 290.0 522.5 C288.5 525.8 286.9 529.8 286.9 532.0 C286.9 534.1 288.6 535.4 290.0 535.6 C291.4 535.8 293.3 534.7 295.0 533.1 C296.7 531.6 297.8 529.6 300.0 526.2 C302.2 522.9 306.8 515.3 308.1 513.1 M337.5 511.9 C336.5 511.4 333.3 508.9 331.2 508.9 C329.2 508.9 327.1 509.7 325.0 512.0 C322.9 514.3 320.2 519.1 318.8 522.5 C317.3 525.9 316.1 530.2 316.2 532.4 C316.4 534.6 318.1 535.5 319.4 535.6 C320.7 535.7 322.2 534.9 324.0 533.1 C325.8 531.4 327.8 528.5 330.0 525.0 C332.2 521.5 336.2 514.1 337.5 511.9 M405.0 552.5 C405.4 553.5 406.5 558.2 407.5 558.8 C408.5 559.3 410.0 558.1 411.0 556.0 C412.0 553.9 413.4 550.2 413.8 546.0 C414.1 541.8 413.1 533.3 413.0 530.8 M462.5 511.9 C461.9 511.3 460.3 508.4 458.8 508.3 C457.2 508.2 454.7 509.1 453.0 511.0 C451.3 513.0 450.1 516.5 448.8 520.0 C447.4 523.5 445.0 529.2 445.0 532.0 C445.0 534.8 447.4 536.3 448.8 536.8 C450.1 537.3 451.5 536.0 453.0 535.2 C454.5 534.4 455.7 534.5 457.5 532.0 C459.3 529.4 462.9 523.3 463.8 520.0 C464.6 516.7 462.7 513.2 462.5 511.9"/>
<path stroke-width="5.3" d="M360.0 509.6 C359.0 509.9 356.0 508.7 353.8 511.2 C351.5 513.8 347.7 521.4 346.2 525.0 C344.8 528.6 344.4 531.1 345.0 532.9 C345.6 534.8 347.7 536.0 350.0 536.2 C352.3 536.4 357.3 534.3 358.8 533.9 M384.4 509.4 C385.0 511.3 387.4 517.9 388.1 521.0 C388.8 524.1 389.1 526.0 388.8 528.0 C388.4 530.0 387.7 531.6 386.2 532.9 C384.8 534.3 382.5 535.9 380.0 536.2 C377.5 536.5 373.2 535.6 371.2 535.0 C369.3 534.3 368.6 532.8 368.1 532.4 M436.4 515.6 C436.2 517.0 436.0 521.6 435.3 524.3 C434.6 527.0 432.8 530.0 432.4 531.9 C432.0 533.7 432.1 534.5 432.7 535.3 C433.3 536.1 435.5 536.4 436.1 536.6 M555.0 509.6 C553.8 510.5 549.6 512.0 547.5 515.0 C545.4 518.0 543.1 524.3 542.5 527.5 C541.9 530.7 542.5 532.4 543.8 533.9 C545.0 535.5 547.3 537.0 550.0 536.8 C552.7 536.6 558.3 533.6 560.0 532.9"/>
<path stroke-width="4.2" d="M421.0 529.4 C421.5 527.5 423.5 521.4 424.2 518.0 C424.9 514.6 424.6 512.3 425.2 509.2 C425.8 506.1 426.6 502.1 427.9 499.4 C429.1 496.7 432.1 494.1 432.9 493.0"/>
<path stroke-width="4.0" d="M432.9 493.0 C433.4 492.8 434.7 491.7 435.5 492.0 C436.4 492.3 437.7 493.3 438.0 494.6 C438.3 495.8 438.1 497.7 437.4 499.7 C436.6 501.6 434.8 504.7 433.4 506.4 C432.0 508.1 429.9 509.1 428.8 509.6 C427.7 510.1 427.0 509.3 426.6 509.2 M522.5 502.5 L548.1 502.5 M595.0 502.5 L620.0 502.5"/>
<path stroke-width="4.6" d="M426.6 509.2 C427.4 509.7 430.0 510.9 431.6 512.0 C433.2 513.1 435.6 515.0 436.4 515.6"/>
<path stroke-width="3.2" d="M462.5 512.0 C461.2 513.8 456.5 520.0 455.0 522.5 C453.5 525.0 452.7 526.4 453.5 527.0 C454.3 527.6 457.2 527.5 460.0 526.0 C462.8 524.5 468.3 519.3 470.0 518.0 M582.5 535.7 C583.8 535.5 587.4 535.3 590.0 534.7 C592.6 534.1 596.7 532.7 598.0 532.4"/>
</g></svg>
<!-- /script text -->

<!-- bottom panel -->
<div class="abs" id="bottom" style="left:1px;top:610px;width:854px;height:104px;background:#f0f0f0;"></div>
<div class="t" id="savein" style="left:8px;top:625.25px;font-size:11px;transform:scaleX(0.9709);transform-origin:0 0;">Save in:</div>
<div class="abs" id="path" style="left:92px;top:620px;width:526px;height:20px;box-sizing:border-box;border:1px solid #abadb3;background:#fff;"></div>
<div class="t" id="pathtxt" style="left:95px;top:624.85px;font-size:11px;transform:scaleX(0.9873);transform-origin:0 0;">D:\Video\apps\discotheek</div>
<div class="btn" style="left:626px;top:620px;width:77px;height:21px;"></div>
<div class="t" id="browse" style="left:640.5px;top:624.85px;font-size:11px;transform:scaleX(1.0036);transform-origin:0 0;">Browse...</div>
<div class="abs" style="left:641px;top:635px;width:6px;height:1px;background:#000;"></div>
<div class="btn" style="left:712px;top:620px;width:79px;height:21px;"></div>
<div class="t" id="options" style="left:726.5px;top:624.85px;font-size:11px;transform:scaleX(1.0200);transform-origin:0 0;">Options...</div>
<div class="abs" style="left:727px;top:635px;width:8px;height:1px;background:#000;"></div>
<div class="btn" style="left:800px;top:619px;width:47px;height:23px;"></div>
<svg class="abs" style="left:813px;top:623px;" width="20" height="15" viewBox="0 0 20 15"><path d="M2.7 12.5 V3 H7.5 L8.8 4.5 H15 V6.6 M2.7 12.5 L5.8 6.6 H18.2 L15 12.5 Z" fill="none" stroke="#000" stroke-width="1.5" stroke-linejoin="round"/></svg>

<div class="btn" style="left:9px;top:651px;width:75px;height:23px;"></div>
<svg class="abs" style="left:25px;top:655px;" width="16" height="14" viewBox="0 0 16 14"><path d="M1.5 1.5 L7 6.8 L1.5 12 Z M7.5 1.5 L13 6.8 L7.5 12 Z" fill="#9c9cd4" stroke="#30306e" stroke-width="1.3" stroke-linejoin="round"/></svg>
<div class="t" id="start" style="left:44px;top:657.35px;font-size:11px;transform:scaleX(1.0364);transform-origin:0 0;">Start</div>
<div class="abs" style="left:44px;top:668px;width:7px;height:1px;background:#000;"></div>
<div class="abs" style="left:92px;top:655px;width:756px;height:16px;box-sizing:border-box;border:1px solid #bcbcbc;background:#e6e6e6;"></div>
<div class="abs" style="left:92px;top:656px;width:2px;height:14px;background:#0078d7;"></div>

<div class="btn dis" style="left:9px;top:683px;width:73px;height:23px;"></div>
<div class="abs" style="left:26px;top:688px;width:12px;height:12px;box-sizing:border-box;border:1px solid #8c8c8c;background:#a4a4a4;"></div>
<div class="t" id="stop" style="left:44px;top:689.35px;font-size:11px;color:#838383;transform:scaleX(0.9491);transform-origin:0 0;">Stop</div>
<div class="abs" style="left:44px;top:700px;width:6px;height:1px;background:#838383;"></div>
<div class="abs" style="left:92px;top:687px;width:756px;height:16px;box-sizing:border-box;border:1px solid #bcbcbc;background:#e6e6e6;"></div>
<div class="abs" style="left:92px;top:688px;width:2px;height:14px;background:#0078d7;"></div>

<!-- window borders on top -->
<div class="abs" style="left:1px;top:610px;width:1px;height:104px;background:#fff;"></div>
<div class="abs" style="left:1px;top:713px;width:854px;height:1px;background:#fff;"></div>
<div class="abs" style="left:0;top:0;width:1px;height:715px;background:#6b6b6b;"></div>
<div class="abs" style="left:855px;top:0;width:1px;height:715px;background:#6b6b6b;"></div>
<div class="abs" style="left:0;top:0;width:1px;height:36px;background:#0f1830;"></div>
<div class="abs" style="left:855px;top:0;width:1px;height:36px;background:#0f1830;"></div>
<div class="abs" style="left:0;top:714px;width:856px;height:1px;background:#5a5a5a;"></div>
<div class="abs" style="left:0;top:0;width:856px;height:1px;background:#141c33;"></div>
</body>
</html>
